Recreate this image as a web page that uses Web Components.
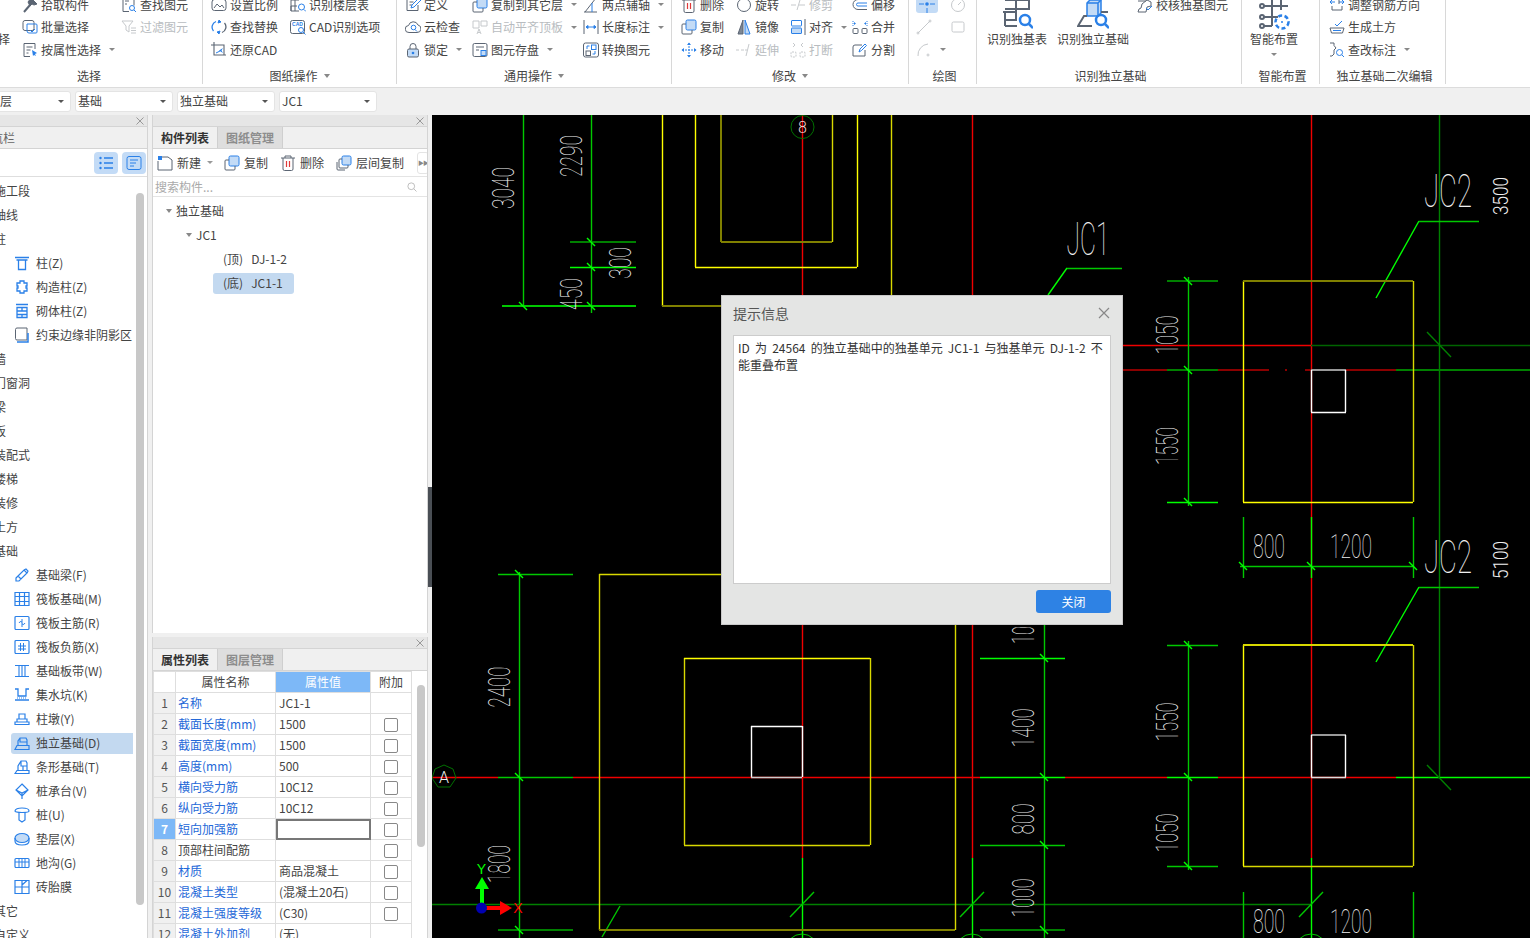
<!DOCTYPE html>
<html lang="zh">
<head>
<meta charset="utf-8">
<title>独立基础</title>
<style>
    html, body { margin: 0; height: 100%; overflow: hidden; background: #f0f0f0; }
    body { font: 12px/16px "Noto Sans CJK SC", "Noto Sans", sans-serif; color: #444; }
</style>
</head>
<body>
<app-shell></app-shell>
<script>
const B = 'stroke="#2a80e8"', R = 'stroke="#e03a3a"', L = 'fill="#c3dbf6"', FB = 'fill="#2a80e8" stroke="none"';

const ICONS = {
    // ribbon, 16 box
    pick: `<path d="M2 15l6-7" stroke-width="2"/><path d="M6 5l3-4 6 6-3 1-2-1-2 2z" fill="#5b6573"/>`,
    find: `<path d="M2 .5h11v8M2 .5v14h6"/><path d="M4 4h4M4 7h2" /><circle cx="11" cy="11" r="2.5" ${B}/><path d="M13 13l2 2" ${B}/>`,
    batch: `<rect x="1" y="1.5" width="11" height="10" rx="2"/><path d="M5 5h9a1 1 0 0 1 1 1v7a1 1 0 0 1-1 1H7a2 2 0 0 1-2-2z" ${B}/><path d="M8 11l2 2 3-3" ${B}/>`,
    attr: `<path d="M13 7V1.5H2v13h6M4.500 5h6M4.500 8h4M4.500 11h2"/><path d="M10 8l5 3-2 1 1 2-2-1-1 1z" ${FB}/>`,
    filter: `<path d="M1 2h11L8 7v6L5 11V7z"/><path d="M10 9h5M10 11.500h5M10 14h5"/>`,
    scale: `<rect x="1" y="2.500" width="14" height="11" rx="2.500"/><path d="M3 11l3-4 3 3 2-2 2 3"/>`,
    floor: `<path d="M1 3h8M5 0v9M1 9h6M1 3v11h8M1 9v5M5 9v5"/><circle cx="11.500" cy="10" r="3" ${B}/><path d="M14 12.500l2 2" ${B}/>`,
    replace: `<path d="M5 2.500A6 6 0 0 0 2.500 12" ${B} stroke-width="1.300"/><path d="M11 13.500A6 6 0 0 0 13.500 4" stroke-width="1.300"/><path d="M8 1l2 2-3 1zM8 15l-2-2 3-1z" fill="#2a80e8" ${B}/>`,
    cadopt: `<rect x=".5" y="1.500" width="14" height="13" rx="2"/><text x="7.500" y="7" font-size="5" text-anchor="middle" font-family="Liberation Sans" font-weight="700" stroke="none" fill="#2a80e8">CAD</text><circle cx="11" cy="11" r="2.500" ${B} fill="#fff"/><path d="M13 13l2.500 2.500" ${B}/>`,
    restore: `<path d="M3 0v13h12M0 3h13v10" stroke-width="1.100"/><path d="M12 6L8 8.500l4 2.500-1.500-2.500z" ${FB}/><path d="M9 9L5 11" ${B}/>`,
    define: `<path d="M11 1.500H2v12h11V8M4.500 5h4M4.500 8h3"/><path d="M6 11l1-3 7-7 2 2-7 7z" ${B} fill="#fff"/>`,
    cloud: `<path d="M4 13.500a3.500 3.500 0 0 1-.5-7 5 5 0 0 1 9.500-.5 3.800 3.800 0 0 1-1 7.500z"/><circle cx="8.500" cy="8.500" r="2.300" ${B}/><path d="M10 10.500l2 2" ${B}/>`,
    lock: `<path d="M5 7V4.500a3 3 0 0 1 6 0V7"/><rect x="2.500" y="7" width="11" height="8" rx="1.500" fill="#c3dbf6"/><circle cx="8" cy="11" r="1.300" ${FB}/>`,
    cfloor: `<rect x="5" y="1" width="10" height="10" rx="1.500" ${B} ${L}/><path d="M5 5H2a1 1 0 0 0-1 1v8a1 1 0 0 0 1 1h8a1 1 0 0 0 1-1v-3"/>`,
    auto: `<path d="M1 2h6v7H1zM9 2h6v5H9z"/><path d="M5 15l2-5 2 5M6 13.500h2"/>`,
    save: `<rect x="1" y="1.500" width="14" height="13" rx="1.500"/><path d="M4 5h8M4 8h3"/><rect x="9" y="8.500" width="5" height="5" ${L} ${B}/>`,
    twoaxis: `<path d="M1 15h13M2 15L13 1"/><path d="M9 15V6" ${B}/>`,
    dim: `<path d="M1 1v14M15 1v14"/><path d="M3 8h10M3 8l2-1.500v3zM13 8l-2-1.500v3z" ${B} fill="#2a80e8"/>`,
    convert: `<rect x=".5" y="1" width="15" height="14" rx="2"/><rect x="8.500" y="3" width="4.500" height="4.500" ${B}/><rect x="3" y="9" width="4.500" height="4.500"/><path d="M4 7V4h2.500M12 9v3H9.500" ${B}/>`,
    del: `<path d="M1 3h14M5 3V1h6v2M3 3v11a1.500 1.500 0 0 0 1.500 1.500h7A1.500 1.500 0 0 0 13 14V3"/><path d="M6.500 6v6M9.500 6v6" ${R} stroke-width="1.200"/>`,
    rotate: `<circle cx="8" cy="8" r="6.500"/><path d="M10 1l2 1" ${B}/>`,
    trim: `<path d="M1 8h5M9 8h6M10 3L7 13"/>`,
    offset: `<path d="M15 2.500H6a5 5 0 0 0 0 10h9"/><path d="M15 6H6a1.500 1.500 0 0 0 0 3h9" ${B}/>`,
    copy: `<rect x="5" y="1" width="10" height="10" rx="1.500" ${B} ${L}/><path d="M5 5H2a1 1 0 0 0-1 1v8a1 1 0 0 0 1 1h8a1 1 0 0 0 1-1v-3"/>`,
    mirror: `<path d="M7 1L2 15h5z" fill="#7d8794"/><path d="M9 1l5 14H9z" ${B} ${L}/>`,
    align: `<path d="M15 0v16"/><rect x="1.500" y="1.500" width="10" height="5.500" rx=".5" ${B}/><rect x="1.500" y="9" width="10" height="5.500" rx=".5" ${B} ${L}/>`,
    merge: `<rect x="1" y="9.500" width="5" height="5" rx="1"/><rect x="10" y="9.500" width="5" height="5" rx="1"/><path d="M2 3l2 1.500L2 6zM14 3l-2 1.500L14 6z" ${FB}/><path d="M1 2v5M15 2v5" ${B} stroke-dasharray="1 1"/>`,
    move: `<path d="M8 1v14M1 8h14" ${B} stroke-dasharray="2 1"/><path d="M8 .5l2 2.500H6zM8 15.500L6 13h4zM.5 8L3 6v4zM15.500 8L13 10V6z" ${FB}/>`,
    extend: `<path d="M0 8h3M5 8h3M9 8h2M13 2l-3 12"/>`,
    break: `<path d="M3 1l2 2-2 2M13 1l-2 2 2 2"/><rect x="1" y="10" width="5" height="5" rx="1" stroke-dasharray="2 1"/><rect x="10" y="10" width="5" height="5" rx="1" stroke-dasharray="2 1"/>`,
    split: `<path d="M10 3H3a2 2 0 0 0-2 2v9h12V8"/><path d="M7 10l1-3 5-5 1.500 1.500-5 5z" ${B}/>`,
    point: `<path d="M0 7h5M11 7h5M8 11v5" ${B}/><circle cx="8" cy="7" r="1.800" ${FB}/>`,
    circle: `<circle cx="8" cy="8" r="6.500"/><path d="M11 5L8 8"/>`,
    line: `<path d="M2 14L14 2"/><circle cx="2" cy="14" r="1"/><circle cx="14" cy="2" r="1"/>`,
    rect: `<rect x="2" y="3" width="12" height="10" rx="1.500"/>`,
    arc: `<path d="M2 14A11 11 0 0 1 12 2"/><circle cx="12" cy="13" r="1"/>`,
    check: `<path d="M1 1h11M1 4h8"/><path d="M9 15H1l1-3 2-1 1-4 5-4 4 2v4l-4 1z"/><path d="M9 11l2 2 4-4" ${B}/>`,
    adjust: `<path d="M1 5h5M1 5l2-2M1 5l2 2M15 5h-5M15 5l-2-2M15 5l-2 2" ${B}/><path d="M6 1h4v6M3 9v4h10V9"/>`,
    earth: `<path d="M1 9h14l-1.500 5H2.500z"/><path d="M4 11.500h8" ${B}/><path d="M6 5l2 2 5-5" ${B}/>`,
    mark: `<path d="M1 1h4v2.500L7 6 5 8v4L3 14H1"/><circle cx="10.500" cy="10.500" r="3" ${B}/><path d="M13 13l2 2" ${B}/>`,
    // large, 32 box
    tbl: `<g stroke-width="2"><path d="M4 2h24M4 11h24M2 14h13v8H4M4 14v14M15 2v11M28 2v10M15 14v6M4 28h12"/></g><circle cx="24" cy="22" r="5" ${B} stroke-width="2.500"/><path d="M28 26l4 4" ${B} stroke-width="2.500"/>`,
    iso: `<path d="M10 5l3-3h11v13l-3 3H10z" ${L} ${B} stroke-width="1.500"/><path d="M21 18V5H10M21 5l3-3" ${B} stroke-width="1.500"/><path d="M10 18H7L1 28h14M7 18L1 28" stroke-width="2"/><path d="M24 14h7" stroke-width="2"/><circle cx="24" cy="22" r="5" ${B} stroke-width="2.500"/><path d="M28 26l4 4" ${B} stroke-width="2.500"/>`,
    smart: `<g stroke-width="2"><path d="M6 8h24M6 19h14M6 28h8M14 0v28M23 0v12"/><circle cx="4" cy="8" r="2" fill="#fff"/><circle cx="4" cy="19" r="2" fill="#fff"/><circle cx="4" cy="28" r="2" fill="#fff"/></g><circle cx="24" cy="24" r="6.500" ${B} stroke-width="2.500" stroke-dasharray="4 2.500"/><circle cx="24" cy="24" r="1" ${FB}/>`,
    // toolbars
    listv: `<path d="M6 3h9M6 8h9M6 13h9" ${B} stroke-width="1.300"/><circle cx="2.500" cy="3" r="1.200" ${FB}/><circle cx="2.500" cy="8" r="1.200" ${FB}/><circle cx="2.500" cy="13" r="1.200" ${FB}/>`,
    treev: `<rect x="1" y="1.500" width="14" height="13" rx="2" ${B}/><path d="M4 5h8M4 8h6M4 11h4" ${B}/>`,
    newdoc: `<path d="M5 2h6l4 3v10H1V6"/><path d="M1 1h4v4H1z" fill="#2a80e8" stroke="none"/>`,
    lcopy: `<rect x="6" y="1" width="9" height="9" rx="1.500" ${B} ${L}/><path d="M6 4H4a1 1 0 0 0-1 1v7a1 1 0 0 0 1 1h7a1 1 0 0 0 1-1v-2"/><path d="M1 7v7a1 1 0 0 0 1 1h7"/>`,
    search: `<circle cx="7" cy="7" r="4.500"/><path d="M10.500 10.500L14 14"/>`,
    // navigation tree
    zhu: `<path d="M1 2.500h14M2.500 5h11M4.500 5v9.500h7V5" ${B} stroke-width="1.300"/>`,
    gzz: `<path d="M6 2h4v2h3v3h-1v2h1v3h-3v2H6v-2H3V9h1V7H3V4h3z" ${B} stroke-width="1.300"/>`,
    qtz: `<path d="M2 1.500h12M3 4.500h10v10H3zM3 8h10M3 11.500h10M8 4.500V8M8 11.500v3" ${B} stroke-width="1.300"/>`,
    ys: `<path d="M13 13H3a1.500 1.500 0 0 1-1.500-1.500v-9A1.500 1.500 0 0 1 3 1h10z" stroke="#5b6573"/><path d="M14 6v9H3" ${B} stroke-width="1.500"/>`,
    liang: `<path d="M2 11L10 3l3 3-8 8H2zM10 3l2-1 2 2-1 2M4 9l3 3" ${B} stroke-width="1.200"/>`,
    fb: `<path d="M1 1.500h14v13H1zM5.500 1.500v13M10.500 1.500v13M1 5.500h14M1 10.500h14" ${B} stroke-width="1.200"/>`,
    fzj: `<rect x="1" y="1.500" width="14" height="13" rx="1" ${B} stroke-width="1.200"/><path d="M8 4v8M5 8a2 2 0 0 1 3-1M11 8a2 2 0 0 1-3 1" ${B}/>`,
    ffj: `<rect x="1" y="1.500" width="14" height="13" rx="1" ${B} stroke-width="1.200"/><path d="M6.500 4v8M9.500 4v8M4 7h8M4 10h8" ${B}/>`,
    bd: `<path d="M1 2.500h14M1 13.500h14M5 2.500v11M8 2.500v11M11 2.500v11" ${B} stroke-width="1.100"/>`,
    jsk: `<path d="M1 2h3v7h8V2h3M1 13h14" ${B} stroke-width="1.300"/><path d="M3 11h10" ${B} stroke-dasharray="1 1"/>`,
    zd: `<path d="M5 3h6v5H5zM3 8h10v3H3zM1 11h14v2.500H1z" ${B} stroke-width="1.200"/>`,
    dl: `<path d="M1 14.500h14v-4H3L1 14.500zM4 10.500V6l2-3h6l1 2v5.500M6 3v4h7" ${B} stroke-width="1.200"/>`,
    cx: `<path d="M1 14.500h14v-3H3zM4 11.500V7l3-5h5l1 2v7.500M7 2v5h6M9 7v4.500" ${B} stroke-width="1.200"/>`,
    ct: `<path d="M8 1l6 6-6 6-6-6zM2 7l6 3 6-3M8 10v6" ${B} stroke-width="1.200"/>`,
    zhuang: `<path d="M8 1c4 0 7 1 7 3 0 1-3 1.500-7 1.500S1 5 1 4c0-2 3-3 7-3zM5 5.500V13l3 2 3-2V5.500" ${B} stroke-width="1.200"/>`,
    dc: `<ellipse cx="8" cy="7" rx="7" ry="4.500" ${B} stroke-width="1.200" ${L}/><path d="M1 7v3c0 2.500 3 4 7 4s7-1.500 7-4V7" ${B} stroke-width="1.200"/>`,
    dg: `<rect x="1" y="3.500" width="14" height="9" rx="1" ${B} stroke-width="1.200"/><path d="M1 7h14M5 3.500v9M8 3.500v9M11 3.500v9" ${B}/>`,
    ztm: `<path d="M1 1.500h14v13H1zM1 8h14M8 1.500v13M8 6L13 1.500" ${B} stroke-width="1.200"/>`
};

function icon(name, size = 16, box = 16) {
    return `<svg viewBox="0 0 ${box} ${box}" width="${size}" height="${size}" fill="none" stroke="currentColor">${ICONS[name] || ''}</svg>`;
}

class RibbonBtn extends HTMLElement {
    connectedCallback() {
        const off = this.hasAttribute('disabled');
        this.attachShadow({ mode: 'open' }).innerHTML = `
            <style>
                :host { display: flex; align-items: center; gap: 3px; white-space: nowrap; color: ${off ? '#b8bcc0' : '#444'}; }
                svg { flex: none; color: ${off ? '#c6c9cc' : '#5b6573'}; }
                .caret { width: 0; height: 0; margin-left: 5px; border: 3px solid transparent; border-top: 3px solid #888; border-bottom: 0; }
                .on { display: flex; padding: 0 3px; background: #c3dbf6; border-radius: 3px; }
            </style>
            ${this.hasAttribute('active') ? `<span class="on">${icon(this.getAttribute('icon'))}</span>` : icon(this.getAttribute('icon'))}
            <slot></slot>
            ${this.hasAttribute('caret') ? '<span class="caret"></span>' : ''}
        `;
    }
}

class RibbonLarge extends HTMLElement {
    connectedCallback() {
        this.attachShadow({ mode: 'open' }).innerHTML = `
            <style>
                :host { grid-row: 1 / 4; display: flex; flex-direction: column; align-items: center; white-space: nowrap; }
                svg { flex: none; color: #5b6573; margin: 4.5px 0 1px; }
                .caret { width: 0; height: 0; margin-top: 6px; border: 3px solid transparent; border-top: 3px solid #888; border-bottom: 0; }
            </style>
            ${icon(this.getAttribute('icon'), 32, 32)}
            <slot></slot>
            ${this.hasAttribute('caret') ? '<span class="caret"></span>' : ''}
        `;
    }
}

class RibbonGroup extends HTMLElement {
    connectedCallback() {
        this.attachShadow({ mode: 'open' }).innerHTML = `
            <style>
                :host { display: flex; flex-direction: column; flex: none; box-sizing: border-box; height: 84px; border-right: 1px solid #d8d8d8; }
                .body { display: grid; grid-auto-flow: column; grid-template-rows: repeat(3, 22.5px); grid-template-columns: var(--cols, auto); height: 74.5px; margin-top: -6.5px; padding-left: var(--pad, 8px); }
                .label { display: flex; justify-content: center; align-items: center; gap: 6px; height: 16px; padding-left: var(--lp, 0); white-space: nowrap; }
                .caret { width: 0; height: 0; border: 3.5px solid transparent; border-top: 4px solid #888; border-bottom: 0; }
            </style>
            <div class="body"><slot></slot></div>
            <div class="label">${this.getAttribute('label')}${this.hasAttribute('caret') ? '<span class="caret"></span>' : ''}</div>
        `;
    }
}

class AppRibbon extends HTMLElement {
    constructor() {
        super();
        this.attachShadow({ mode: 'open' }).innerHTML = `
            <style>
                :host { display: flex; height: 88px; box-sizing: border-box; background: #fff; border-bottom: 1px solid #dcdcdc; overflow: hidden; }
            </style>
            <ribbon-group label="选择" style="width:227px;margin-left:-24px;--pad:24px;--cols:22px 99px 1fr">
                <ribbon-large icon="none" style="margin-left:-14px;width:24px">选择</ribbon-large>
                <ribbon-btn icon="pick">拾取构件</ribbon-btn>
                <ribbon-btn icon="batch">批量选择</ribbon-btn>
                <ribbon-btn icon="attr" caret>按属性选择</ribbon-btn>
                <ribbon-btn icon="find">查找图元</ribbon-btn>
                <ribbon-btn icon="filter" disabled>过滤图元</ribbon-btn>
            </ribbon-group>
            <ribbon-group label="图纸操作" caret style="width:194px;--cols:79px 1fr">
                <ribbon-btn icon="scale">设置比例</ribbon-btn>
                <ribbon-btn icon="replace">查找替换</ribbon-btn>
                <ribbon-btn icon="restore">还原CAD</ribbon-btn>
                <ribbon-btn icon="floor">识别楼层表</ribbon-btn>
                <ribbon-btn icon="cadopt">CAD识别选项</ribbon-btn>
            </ribbon-group>
            <ribbon-group label="通用操作" caret style="width:275px;--cols:67px 111px 1fr">
                <ribbon-btn icon="define">定义</ribbon-btn>
                <ribbon-btn icon="cloud">云检查</ribbon-btn>
                <ribbon-btn icon="lock" caret>锁定</ribbon-btn>
                <ribbon-btn icon="cfloor" caret>复制到其它层</ribbon-btn>
                <ribbon-btn icon="auto" disabled caret>自动平齐顶板</ribbon-btn>
                <ribbon-btn icon="save" caret>图元存盘</ribbon-btn>
                <ribbon-btn icon="twoaxis" caret>两点辅轴</ribbon-btn>
                <ribbon-btn icon="dim" caret>长度标注</ribbon-btn>
                <ribbon-btn icon="convert">转换图元</ribbon-btn>
            </ribbon-group>
            <ribbon-group label="修改" caret style="width:237px;--pad:9px;--cols:55px 54px 62px 1fr">
                <ribbon-btn icon="del">删除</ribbon-btn>
                <ribbon-btn icon="copy">复制</ribbon-btn>
                <ribbon-btn icon="move">移动</ribbon-btn>
                <ribbon-btn icon="rotate">旋转</ribbon-btn>
                <ribbon-btn icon="mirror">镜像</ribbon-btn>
                <ribbon-btn icon="extend" disabled>延伸</ribbon-btn>
                <ribbon-btn icon="trim" disabled>修剪</ribbon-btn>
                <ribbon-btn icon="align" caret>对齐</ribbon-btn>
                <ribbon-btn icon="break" disabled>打断</ribbon-btn>
                <ribbon-btn icon="offset">偏移</ribbon-btn>
                <ribbon-btn icon="merge">合并</ribbon-btn>
                <ribbon-btn icon="split">分割</ribbon-btn>
            </ribbon-group>
            <ribbon-group label="绘图" style="width:68px;--pad:7px;--cols:34px 1fr;--lp:4px">
                <ribbon-btn icon="point" active></ribbon-btn>
                <ribbon-btn icon="line" disabled></ribbon-btn>
                <ribbon-btn icon="arc" disabled caret></ribbon-btn>
                <ribbon-btn icon="circle" disabled></ribbon-btn>
                <ribbon-btn icon="rect" disabled></ribbon-btn>
            </ribbon-group>
            <ribbon-group label="识别独立基础" style="width:265px;--pad:5px;--cols:70px 82px 1fr;--lp:3px">
                <ribbon-large icon="tbl">识别独基表</ribbon-large>
                <ribbon-large icon="iso">识别独立基础</ribbon-large>
                <ribbon-btn icon="check" style="margin-left:3px">校核独基图元</ribbon-btn>
            </ribbon-group>
            <ribbon-group label="智能布置" style="width:78px;--pad:2px;--cols:60px;--lp:4px">
                <ribbon-large icon="smart" caret>智能布置</ribbon-large>
            </ribbon-group>
            <ribbon-group label="独立基础二次编辑" style="width:126px;--pad:9px;--cols:1fr;--lp:4px">
                <ribbon-btn icon="adjust">调整钢筋方向</ribbon-btn>
                <ribbon-btn icon="earth">生成土方</ribbon-btn>
                <ribbon-btn icon="mark" caret>查改标注</ribbon-btn>
            </ribbon-group>
        `;
    }
}

class ComboBox extends HTMLElement {
    constructor() {
        super();
        this.attachShadow({ mode: 'open' }).innerHTML = `
            <style>
                :host { display: flex; align-items: center; justify-content: space-between; flex: none; box-sizing: border-box; width: 98px; height: 21px; padding: 0 6px 0 2px; background: #fff; border: 1px solid #e4e4e4; border-radius: 3px; }
                i { width: 0; height: 0; border: 3px solid transparent; border-top: 3px solid #555; border-bottom: 0; }
            </style>
            <slot></slot><i></i>
        `;
    }
}

class ComboBar extends HTMLElement {
    constructor() {
        super();
        this.attachShadow({ mode: 'open' }).innerHTML = `
            <style>
                :host { display: flex; align-items: center; gap: 4px; height: 27px; margin-left: -27px; padding-bottom: 1px; box-sizing: border-box; }
            </style>
            <combo-box>基础层</combo-box>
            <combo-box>基础</combo-box>
            <combo-box>独立基础</combo-box>
            <combo-box>JC1</combo-box>
        `;
    }
}

class DockPanel extends HTMLElement {
    constructor() {
        super();
        this.attachShadow({ mode: 'open' }).innerHTML = `
            <style>
                :host { display: flex; flex-direction: column; box-sizing: border-box; background: #fff; border: solid #d4d4d4; border-width: 0 1px 0 1px; overflow: hidden; }
                .strip { display: flex; justify-content: flex-end; align-items: center; flex: none; height: 11px; padding-right: 3px; background: #e6e6e6; border-bottom: 1px solid #d4d4d4; }
                svg { stroke: #999; }
            </style>
            <div class="strip"><svg viewBox="0 0 8 8" width="8" height="8"><path d="M.5.5l7 7M7.500.5l-7 7"/></svg></div>
            <slot></slot>
        `;
    }
}

class PanelTabs extends HTMLElement {
    connectedCallback() {
        const [first, second] = this.getAttribute('tabs').split(',');
        this.attachShadow({ mode: 'open' }).innerHTML = `
            <style>
                :host { display: flex; flex: none; height: 21px; background: #f0f0f0; border-bottom: 1px solid #d4d4d4; }
                span { display: flex; align-items: center; justify-content: center; width: 64px; }
                .on { color: #333; font-weight: 700; }
                .off { width: 64px; background: #dedede; color: #8d8d8d; font-weight: 700; border: solid #cfcfcf; border-width: 0 1px; }
            </style>
            <span class="on">${first}</span><span class="off">${second}</span>
        `;
    }
}

class NavItem extends HTMLElement {
    connectedCallback() {
        const ic = this.getAttribute('icon');
        this.attachShadow({ mode: 'open' }).innerHTML = `
            <style>
                :host { display: flex; align-items: center; height: 24px; white-space: nowrap; }
                .row { display: flex; align-items: center; gap: 6px; height: 21px; box-sizing: border-box; }
                .top { margin-left: -6px; }
                .sub { margin-left: 11px; padding-left: 3px; width: 122px; overflow: hidden; }
                .sel { background: #c3d9f0; border-radius: 3px 0 0 3px; }
                svg { flex: none; color: #2a80e8; }
            </style>
            <div class="row ${ic ? 'sub' : 'top'} ${this.hasAttribute('selected') ? 'sel' : ''}">
                ${ic ? icon(ic) : ''}<slot></slot>
            </div>
        `;
    }
}

class NavPanel extends HTMLElement {
    constructor() {
        super();
        const items = [
            ['施工段'], ['轴线'], ['柱'], ['柱(Z)', 'zhu'], ['构造柱(Z)', 'gzz'], ['砌体柱(Z)', 'qtz'], ['约束边缘非阴影区', 'ys'],
            ['墙'], ['门窗洞'], ['梁'], ['板'], ['装配式'], ['楼梯'], ['装修'], ['土方'], ['基础'],
            ['基础梁(F)', 'liang'], ['筏板基础(M)', 'fb'], ['筏板主筋(R)', 'fzj'], ['筏板负筋(X)', 'ffj'], ['基础板带(W)', 'bd'],
            ['集水坑(K)', 'jsk'], ['柱墩(Y)', 'zd'], ['独立基础(D)', 'dl', 1], ['条形基础(T)', 'cx'], ['桩承台(V)', 'ct'],
            ['桩(U)', 'zhuang'], ['垫层(X)', 'dc'], ['地沟(G)', 'dg'], ['砖胎膜', 'ztm'], ['其它'], ['自定义']
        ];
        const rows = items.map(([text, ic, sel]) =>
            `<nav-item ${ic ? `icon="${ic}"` : ''} ${sel ? 'selected' : ''}>${text}</nav-item>`).join('');
        this.attachShadow({ mode: 'open' }).innerHTML = `
            <style>
                :host { display: block; flex: none; width: 148px; }
                dock-panel { height: 100%; border-left: 0; }
                .title { flex: none; height: 21px; line-height: 21px; margin-left: -21px; background: #f0f0f0; color: #666; }
                .titlebar { flex: none; background: #f0f0f0; border-bottom: 1px solid #d4d4d4; overflow: hidden; }
                .tools { display: flex; justify-content: flex-end; align-items: center; gap: 4px; flex: none; height: 27px; padding-right: 1px; border-bottom: 1px solid #dedede; }
                .tools span { display: flex; align-items: center; justify-content: center; width: 24px; height: 22px; background: #c3dbf6; border-radius: 4px; color: #2a80e8; }
                .main { display: flex; flex: 1; min-height: 0; overflow: hidden; }
                .list { width: 136px; flex: none; padding-top: 2px; overflow: hidden; }
                .thumb { width: 8px; height: 712px; margin-top: 16px; background: #c8c8c8; border-radius: 4px; }
            </style>
            <dock-panel>
                <div class="titlebar"><div class="title">导航栏</div></div>
                <div class="tools"><span>${icon('listv')}</span><span>${icon('treev')}</span></div>
                <div class="main"><div class="list">${rows}</div><div class="thumb"></div></div>
            </dock-panel>
        `;
    }
}

class ComponentList extends HTMLElement {
    constructor() {
        super();
        this.attachShadow({ mode: 'open' }).innerHTML = `
            <style>
                :host { display: block; flex: 1; min-height: 0; }
                dock-panel { height: 100%; }
                .tools { display: flex; align-items: center; flex: none; height: 28px; padding-left: 4px; border-bottom: 1px solid #e4e4e4; box-sizing: border-box; color: #444; white-space: nowrap; }
                .tools svg { color: #5b6573; flex: none; }
                .btn { display: flex; align-items: center; gap: 4px; flex: none; }
                .caret { width: 0; height: 0; margin-left: 2px; border: 3px solid transparent; border-top: 3px solid #999; border-bottom: 0; }
                .more { display: flex; align-items: center; justify-content: center; flex: none; width: 10px; height: 20px; margin-left: 11px; border: 1px solid #e4e4e4; border-radius: 3px; font-size: 6px; color: #888; letter-spacing: -1px; }
                .search { display: flex; align-items: center; justify-content: space-between; flex: none; height: 19px; padding: 0 9px 0 2px; border-bottom: 1px solid #e4e4e4; color: #aaa; }
                .search svg { color: #aaa; }
                .tree { padding-top: 2px; color: #444; }
                .node { display: flex; align-items: center; height: 24px; white-space: pre; }
                .tri { width: 0; height: 0; margin-right: 4px; border: 3px solid transparent; border-top: 4px solid #888; border-bottom: 0; }
                .leaf { width: 81px; height: 21px; margin-left: 60px; padding-left: 10px; box-sizing: border-box; display: flex; align-items: center; border-radius: 3px; }
                .sel { background: #c3d9f0; }
            </style>
            <dock-panel>
                <panel-tabs tabs="构件列表,图纸管理"></panel-tabs>
                <div class="tools">
                    <span class="btn">${icon('newdoc')}新建<i class="caret"></i></span>
                    <span class="btn" style="margin-left:11px">${icon('copy')}复制</span>
                    <span class="btn" style="margin-left:12px">${icon('del')}删除</span>
                    <span class="btn" style="margin-left:12px">${icon('lcopy')}层间复制</span>
                    <span class="more" style="margin-left:13px">▶▶</span>
                </div>
                <div class="search">搜索构件...${icon('search', 12)}</div>
                <div class="tree">
                    <div class="node" style="padding-left:13px"><i class="tri"></i>独立基础</div>
                    <div class="node" style="padding-left:33px"><i class="tri"></i>JC1</div>
                    <div class="node"><span class="leaf">(顶)   DJ-1-2</span></div>
                    <div class="node"><span class="leaf sel">(底)   JC1-1</span></div>
                </div>
            </dock-panel>
        `;
    }
}

class PropTable extends HTMLElement {
    constructor() {
        super();
        const rows = [
            ['名称', 'JC1-1', 1, 0], ['截面长度(mm)', '1500', 1, 1], ['截面宽度(mm)', '1500', 1, 1], ['高度(mm)', '500', 1, 1],
            ['横向受力筋', '10C12', 1, 1], ['纵向受力筋', '10C12', 1, 1], ['短向加强筋', '', 1, 1], ['顶部柱间配筋', '', 0, 1],
            ['材质', '商品混凝土', 1, 1], ['混凝土类型', '(混凝土20石)', 1, 1], ['混凝土强度等级', '(C30)', 1, 1], ['混凝土外加剂', '(无)', 1, 0]
        ];
        const body = rows.map(([name, value, link, box], i) => `
            <tr class="${i === 6 ? 'cur' : ''}">
                <th>${i + 1}</th>
                <td class="name ${link ? 'link' : ''}">${name}</td>
                <td class="val">${value}</td>
                <td class="add">${box ? '<span class="box"></span>' : ''}</td>
            </tr>`).join('');
        this.attachShadow({ mode: 'open' }).innerHTML = `
            <style>
                :host { display: block; flex: none; height: 301px; }
                dock-panel { height: 100%; }
                .wrap { display: flex; flex: 1; min-height: 0; overflow: hidden; }
                table { flex: none; border-collapse: collapse; table-layout: fixed; width: 258px; height: max-content; }
                th, td { height: 21px; padding: 0 3px; box-sizing: border-box; border: 1px solid #dedede; font-weight: 400; white-space: nowrap; overflow: hidden; }
                tbody th { background: #f0f0f0; text-align: center; color: #555; padding: 0; }
                thead th { background: #fff; color: #444; text-align: center; }
                thead th.v { background: #7db8f7; color: #fff; }
                .name { padding-left: 2px; }
                .link { color: #2468d8; }
                .val { padding-left: 3px; }
                .add { text-align: center; padding: 0; }
                .box { display: inline-block; vertical-align: middle; width: 12px; height: 12px; border: 1px solid #888; border-radius: 2px; background: #fff; }
                .cur th { background: #7db8f7; color: #fff; font-weight: 700; }
                .cur .val { outline: 2px solid #777; outline-offset: -2px; }
                .thumb { width: 8px; height: 162px; margin: 14px 0 0 5px; background: #c8c8c8; border-radius: 4px; }
                col.a { width: 22px; } col.b { width: 100px; } col.c { width: 95px; } col.d { width: 41px; }
            </style>
            <dock-panel>
                <panel-tabs tabs="属性列表,图层管理"></panel-tabs>
                <div class="wrap">
                    <table>
                        <colgroup><col class="a"><col class="b"><col class="c"><col class="d"></colgroup>
                        <thead><tr><th></th><th>属性名称</th><th class="v">属性值</th><th>附加</th></tr></thead>
                        <tbody>${body}</tbody>
                    </table>
                    <div class="thumb"></div>
                </div>
            </dock-panel>
        `;
    }
}

class CadCanvas extends HTMLElement {
    constructor() {
        super();
        const G1 = '#00ff00', G2 = '#00c800', G3 = '#008000', G4 = '#006400', Y = '#ffff00', Y2 = '#d8d800', O = '#808000', RD = '#f00000', R2 = '#8b0000';
        const tick = (x, y, c = G1, d = 4) => [x - d, y - d, x + d, y + d, c];
        const slash = (x, y) => [x - 12, y + 13, x + 12, y - 12, G2];
        const segs = [
            // red axes, green below the plan
            [802, 115, 802, 858, RD], [972, 115, 972, 858, RD], [1311, 115, 1311, 858, RD],
            [802, 858, 802, 938, G1], [972, 858, 972, 938, G1], [1311, 858, 1311, 938, G1],
            [1123, 345, 1311, 345, RD], [1311, 345, 1530, 345, G4],
            [1123, 370, 1167, 370, R2, 2], [1167, 370, 1218, 370, G3, 2], [1218, 370, 1269, 370, R2, 2], [1285, 370, 1287, 370, R2, 2], [1305, 370, 1396, 370, R2, 2], [1396, 370, 1530, 370, G3, 2],
            [432, 777, 498, 777, RD], [498, 777, 573, 777, G2], [573, 777, 980, 777, RD], [980, 777, 1065, 777, G1], [1065, 777, 1167, 777, RD], [1167, 777, 1218, 777, G1], [1218, 777, 1396, 777, RD], [1396, 777, 1530, 777, G1],
            [1439, 115, 1439, 777, G3], [432, 904, 1311, 904, G3],
            // upper left dimensions
            [523, 115, 523, 306, G2], [591, 115, 591, 313, G2],
            [570, 242, 636, 242, G3, 2], [570, 267, 636, 267, G1], [502, 306, 636, 306, G2, 2],
            tick(523, 306), tick(591, 242), tick(591, 267), tick(591, 306),
            // left dimensions
            [519, 572, 519, 938, G2], [498, 574, 573, 574, G2], [498, 930, 573, 930, G3, 2],
            tick(519, 574), tick(519, 777), tick(519, 930),
            // centre dimensions
            [1044, 625, 1044, 938, G2], [980, 658, 1065, 658, G1], [980, 845, 1065, 845, G2], [980, 930, 1065, 930, G3, 2],
            tick(1044, 658), tick(1044, 777), tick(1044, 845), tick(1044, 930),
            // right dimensions
            [1188, 277, 1188, 506, G2], [1167, 281, 1218, 281, G3, 2], [1167, 502, 1218, 502, G1],
            tick(1188, 281), tick(1188, 370), tick(1188, 502),
            [1188, 641, 1188, 870, G2], [1167, 645, 1218, 645, G2], [1167, 866, 1218, 866, G2],
            tick(1188, 645), tick(1188, 777), tick(1188, 866),
            [1243, 517, 1243, 578, G2], [1311, 517, 1311, 578, G1], [1413, 517, 1413, 578, G2], [1240, 566, 1413, 566, G2],
            tick(1243, 566), tick(1311, 566), tick(1413, 566),
            [1243, 892, 1243, 938, G2], [1413, 892, 1413, 938, G2],
            slash(802, 904), slash(972, 904), slash(1311, 904), [602, 937, 620, 906, G2],
            [1427, 332, 1451, 357, G3], [1427, 765, 1451, 790, G3],
            // leaders
            [1048, 295, 1067, 268, G1], [1067, 268, 1122, 268, G2],
            [1376, 298, 1419, 221, G1], [1419, 221, 1479, 221, G2],
            [1376, 662, 1419, 587, G1], [1419, 587, 1479, 587, G2],
            // footings
            [662, 115, 662, 306, Y], [662, 306, 721, 306, O, 2],
            [695, 115, 695, 267, Y], [695, 267, 857, 267, Y], [857, 115, 857, 267, Y],
            [721, 115, 721, 242, O, 2], [721, 242, 832, 242, O, 2], [832, 115, 832, 242, Y2],
            [891, 115, 891, 295, Y2],
            [599, 574, 599, 930, Y2], [599, 574, 721, 574, Y2], [599, 930, 955, 930, O, 2], [955, 625, 955, 930, Y2],
            [684, 658, 684, 845, Y2], [684, 658, 870, 658, Y], [870, 658, 870, 845, Y2], [684, 845, 870, 845, Y2],
            [1243, 281, 1243, 502, Y], [1243, 502, 1413, 502, Y], [1243, 281, 1413, 281, O, 2], [1413, 281, 1413, 502, Y2],
            [1243, 645, 1243, 866, Y], [1243, 866, 1413, 866, Y2], [1243, 645, 1413, 645, Y2, 2], [1413, 645, 1413, 866, Y2],
            // columns
            [1311, 370, 1346, 370, '#999', 2], [1311, 370, 1311, 412, '#fff'], [1311, 412, 1346, 412, '#fff'], [1345, 370, 1345, 412, '#fff'],
            [1311, 735, 1346, 735, '#999', 2], [1311, 735, 1311, 777, '#fff'], [1345, 735, 1345, 777, '#fff'], [1311, 777, 1346, 777, '#ddd'],
            [751, 726, 802, 726, '#fff'], [751, 726, 751, 777, '#fff'], [802, 726, 802, 777, '#fff'], [751, 777, 802, 777, '#ccc']
        ];
        // thin lines sit on the pixel centre, a little over 1px keeps the colour readable
        const snap = (x1, y1, x2, y2, w) => {
            if (w === 2) return [x1, y1, x2, y2];
            if (x1 === x2) return [x1 + 0.5, y1, x2 + 0.5, y2];
            if (y1 === y2) return [x1, y1 + 0.5, x2, y2 + 0.5];
            return [x1, y1, x2, y2];
        };
        const lines = segs.map(([x1, y1, x2, y2, c, w]) => {
            const p = snap(x1, y1, x2, y2, w);
            return `<line x1="${p[0]}" y1="${p[1]}" x2="${p[2]}" y2="${p[3]}" stroke="${c}" stroke-width="${w || 1.4}"/>`;
        }).join('');

        // text, centre x, centre y, length, cap height, rotated
        const labels = [
            ['3040', 503, 188, 42, 22, 1], ['2290', 571, 156, 42, 22, 1], ['300', 620, 263, 32, 22, 1], ['450', 571, 294, 32, 22, 1],
            ['2400', 499, 687, 41, 22, 1], ['1800', 499, 864, 38, 22, 1],
            ['1050', 1167, 335, 39, 22, 1], ['1550', 1167, 446, 38, 22, 1], ['1550', 1167, 722, 39, 22, 1], ['1050', 1167, 833, 39, 22, 1],
            ['1000', 1023, 626, 36, 22, 1], ['1400', 1023, 728, 39, 22, 1], ['800', 1023, 819, 31, 22, 1], ['1000', 1023, 898, 39, 22, 1],
            ['800', 1269, 546, 32, 24, 0], ['1200', 1351, 546, 42, 24, 0], ['800', 1269, 921, 32, 24, 0], ['1200', 1351, 921, 42, 24, 0],
            ['JC1', 1088, 238, 43, 33, 0], ['JC2', 1448, 190, 48, 33, 0], ['JC2', 1448, 556, 48, 33, 0]
        ];
        const texts = labels.map(([s, x, y, len, h, rot]) => {
            const size = h / 0.71;
            const turn = rot ? `rotate(-90 ${x} ${y})` : '';
            return `<text transform="${turn}" x="${x}" y="${y + h / 2}" font-size="${size}" text-anchor="middle" textLength="${len}" lengthAdjust="spacingAndGlyphs">${s}</text>`;
        }).join('');

        this.attachShadow({ mode: 'open' }).innerHTML = `
            <style>
                :host { display: block; flex: 1; min-width: 0; background: #000; overflow: hidden; }
                svg { display: block; }
                text { font-family: Roboto, "Liberation Sans", sans-serif; font-weight: 100; fill: #f0f0f0; }
                .bold { font-weight: 300; }
            </style>
            <svg viewBox="432 115 1098 823" width="1098" height="823" fill="none">
                ${lines}${texts}
                <text class="bold" transform="rotate(-90 1502 196)" x="1502" y="202" font-size="20" text-anchor="middle" textLength="38" lengthAdjust="spacingAndGlyphs">3500</text>
                <text class="bold" transform="rotate(-90 1502 560)" x="1502" y="566" font-size="20" text-anchor="middle" textLength="38" lengthAdjust="spacingAndGlyphs">5100</text>
                <circle cx="802.500" cy="127" r="11.500" stroke="#007000"/>
                <text class="bold" x="802.500" y="133" font-size="16" text-anchor="middle" style="fill:#f4d0d0">8</text>
                <path d="M444 765l9 4 3 9-6 9h-12l-6-9 3-9z" stroke="#007000"/>
                <text class="bold" x="444" y="783" font-size="16" text-anchor="middle">A</text>
                <circle cx="802" cy="950" r="16" stroke="${G2}"/><circle cx="972" cy="950" r="16" stroke="${G2}"/><circle cx="1311" cy="950" r="16" stroke="${G2}"/>
                <path d="M480 904v-15h-5l7-12 7 12h-5v15z" fill="#00ff00"/>
                <path d="M486 906h14v-5l12 7-12 7v-5h-14z" fill="#ff0000"/>
                <circle cx="481.500" cy="908" r="5.500" fill="#0000b0"/>
                <text x="481.500" y="874" font-size="14" text-anchor="middle" style="fill:#00ff00;font-weight:500;font-family:'Liberation Sans'">Y</text>
                <text x="518" y="913" font-size="14" text-anchor="middle" style="fill:#ff0000;font-weight:500;font-family:'Liberation Sans'">X</text>
            </svg>
        `;
    }
}

class AlertDialog extends HTMLElement {
    constructor() {
        super();
        this.attachShadow({ mode: 'open' }).innerHTML = `
            <style>
                :host { position: absolute; left: 721px; top: 295px; display: flex; flex-direction: column; box-sizing: border-box; width: 402px; height: 330px; padding: 0 11px 11px 11px; background: #e4e5e4; border: 1px solid #c9c9c9; }
                .head { display: flex; justify-content: space-between; align-items: center; flex: none; box-sizing: border-box; height: 39px; padding-bottom: 5px; color: #555; font-size: 14px; }
                .head svg { stroke: #888; margin-right: 1px; }
                .text { flex: none; height: 249px; box-sizing: border-box; padding: 3px 4px; background: #fff; border: 1px solid #ccc; color: #333; line-height: 17px; word-spacing: 2.500px; }
                .foot { display: flex; justify-content: flex-end; margin-top: 6px; }
                button { width: 75px; height: 23px; padding: 0; border: 0; border-radius: 3px; background: #2e82e4; color: #fff; font: inherit; }
            </style>
            <div class="head"><span>提示信息</span><svg viewBox="0 0 12 12" width="12" height="12"><path d="M1 1l10 10M11 1L1 11" stroke-width="1.200"/></svg></div>
            <div class="text">ID 为 24564 的独立基础中的独基单元 JC1-1 与独基单元 DJ-1-2 不能重叠布置</div>
            <div class="foot"><button>关闭</button></div>
        `;
    }
}

class AppShell extends HTMLElement {
    constructor() {
        super();
        this.attachShadow({ mode: 'open' }).innerHTML = `
            <style>
                :host { display: flex; flex-direction: column; position: relative; width: 1530px; height: 938px; overflow: hidden; background: #f0f0f0; }
                .main { display: flex; height: 823px; }
                .mid { display: flex; flex-direction: column; gap: 4px; flex: none; width: 276px; margin-left: 4px; }
                .split { display: flex; align-items: center; flex: none; width: 4px; }
                .split i { width: 4px; height: 100px; margin-top: 21px; background: #4a4f55; }
            </style>
            <app-ribbon></app-ribbon>
            <combo-bar></combo-bar>
            <div class="main">
                <nav-panel></nav-panel>
                <div class="mid">
                    <component-list></component-list>
                    <prop-table></prop-table>
                </div>
                <div class="split"><i></i></div>
                <cad-canvas></cad-canvas>
            </div>
            <alert-dialog></alert-dialog>
        `;
    }
}

customElements.define('ribbon-btn', RibbonBtn);
customElements.define('ribbon-large', RibbonLarge);
customElements.define('ribbon-group', RibbonGroup);
customElements.define('app-ribbon', AppRibbon);
customElements.define('combo-box', ComboBox);
customElements.define('combo-bar', ComboBar);
customElements.define('dock-panel', DockPanel);
customElements.define('panel-tabs', PanelTabs);
customElements.define('nav-item', NavItem);
customElements.define('nav-panel', NavPanel);
customElements.define('component-list', ComponentList);
customElements.define('prop-table', PropTable);
customElements.define('cad-canvas', CadCanvas);
customElements.define('alert-dialog', AlertDialog);
customElements.define('app-shell', AppShell);
</script>
</body>
</html>
